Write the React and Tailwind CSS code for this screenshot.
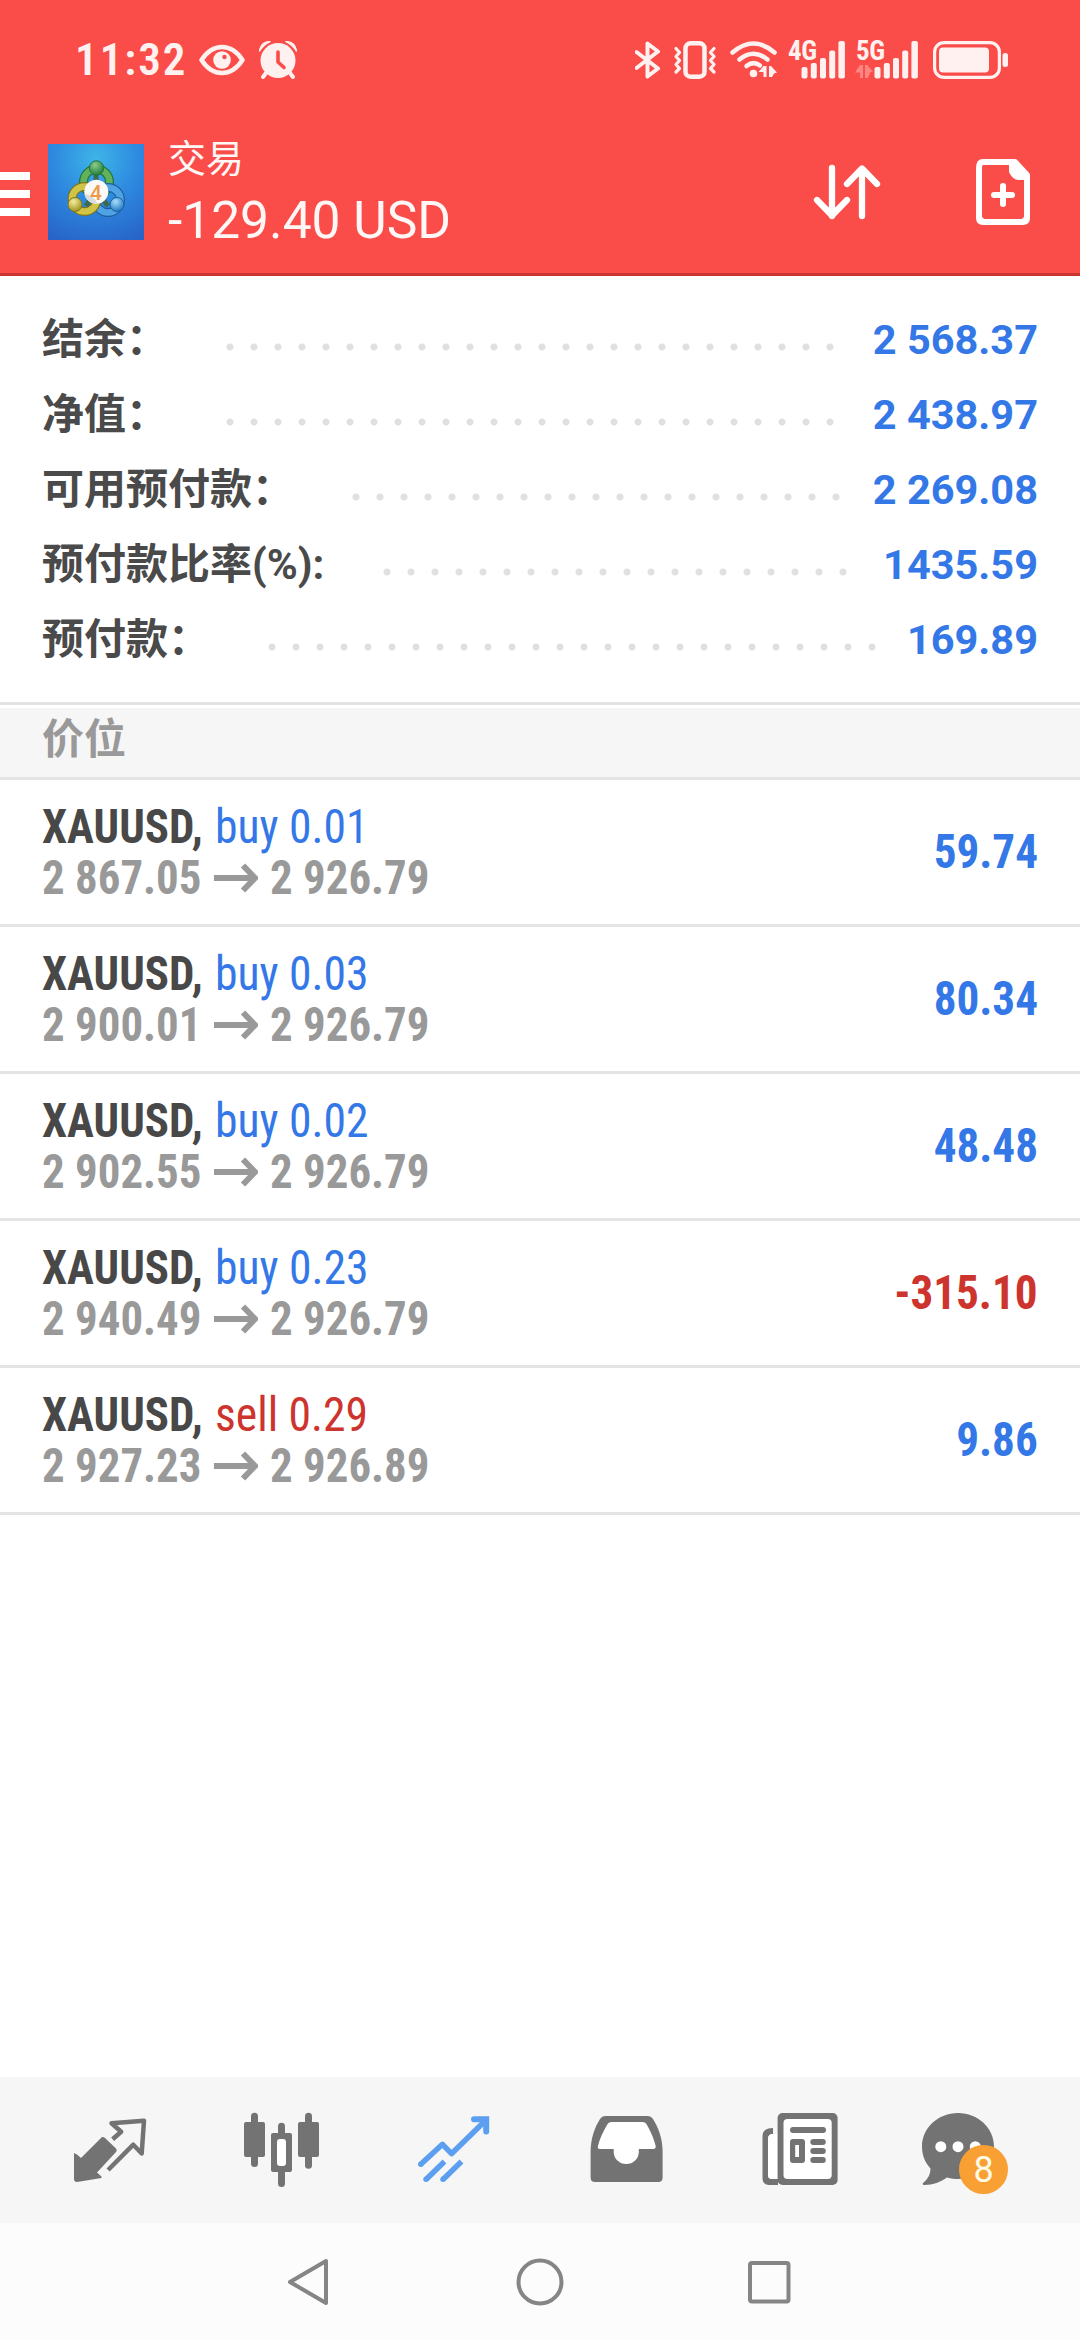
const SANS = "font-['Roboto','Noto_Sans_CJK_SC',sans-serif]";

const summary = [
  { label: "结余：", value: "2 568.37", labelWidth: "w-[176px]", dots: "w-[624px]" },
  { label: "净值：", value: "2 438.97", labelWidth: "w-[176px]", dots: "w-[624px]" },
  { label: "可用预付款：", value: "2 269.08", labelWidth: "w-[302px]", dots: "w-[504px]" },
  { label: "预付款比率(%):", value: "1435.59", labelWidth: "w-[333px]", dots: "w-[480px]" },
  { label: "预付款：", value: "169.89", labelWidth: "w-[218px]", dots: "w-[624px]" },
];

const positions = [
  { symbol: "XAUUSD", side: "buy", volume: "0.01", open: "2 867.05", current: "2 926.79", profit: "59.74" },
  { symbol: "XAUUSD", side: "buy", volume: "0.03", open: "2 900.01", current: "2 926.79", profit: "80.34" },
  { symbol: "XAUUSD", side: "buy", volume: "0.02", open: "2 902.55", current: "2 926.79", profit: "48.48" },
  { symbol: "XAUUSD", side: "buy", volume: "0.23", open: "2 940.49", current: "2 926.79", profit: "-315.10" },
  { symbol: "XAUUSD", side: "sell", volume: "0.29", open: "2 927.23", current: "2 926.89", profit: "9.86" },
];

function EyeIcon() {
  return (
    <svg width="46" height="38" viewBox="0 0 46 38" fill="none">
      <path d="M2.500 19C9 9 16 6 23 6s14 3 20.500 13C37 29 30 32 23 32S9 29 2.500 19Z" stroke="#fff1ef" strokeWidth="4.500" strokeLinejoin="round" />
      <circle cx="23" cy="19" r="8.800" fill="#fff1ef" />
      <circle cx="25.500" cy="16" r="2.200" fill="#fa4d49" />
    </svg>
  );
}

function AlarmIcon() {
  return (
    <svg width="38" height="38" viewBox="0 0 38 38" fill="none">
      <circle cx="19" cy="19.500" r="17.500" fill="#fff1ef" />
      <path d="M0.500 10Q2 1 11 0.500Q4 4 0.500 10ZM37.500 10Q36 1 27 0.500Q34 4 37.500 10Z" fill="#fff1ef" stroke="#fff1ef" strokeWidth="1.500" strokeLinejoin="round" />
      <path d="M7 32l-3 4M31 32l3 4" stroke="#fff1ef" strokeWidth="4" strokeLinecap="round" />
      <path d="M19 11v10l6 5.500" stroke="#fa4d49" strokeWidth="3.600" strokeLinecap="round" strokeLinejoin="round" />
    </svg>
  );
}

function BluetoothIcon() {
  return (
    <svg width="26" height="38" viewBox="0 0 26 38" fill="none" stroke="#fff1ef" strokeWidth="4" strokeLinejoin="round" strokeLinecap="round">
      <path d="M1.500 11L23 27.500 12.500 35.500V2.500L23 10.500 1.500 27" />
    </svg>
  );
}

function VibrateIcon() {
  return (
    <svg width="44" height="38" viewBox="0 0 44 38" fill="none" stroke="#fff1ef" strokeLinejoin="round" strokeLinecap="round">
      <rect x="12.500" y="2.300" width="19" height="33.400" rx="5" strokeWidth="4.500" />
      <path d="M3 7.500l3.500 4L3 15.500 6.500 19.500 3 23.500l3.500 4L3 31M41 7.500l-3.500 4 3.500 4-3.500 4 3.500 4-3.500 4 3.500 3.500" strokeWidth="3.200" />
    </svg>
  );
}

function WifiIcon() {
  return (
    <svg width="48" height="38" viewBox="0 0 48 38" fill="none" stroke="#fff1ef" strokeLinecap="round">
      <path d="M2.500 11.500Q23.500 -6.500 44.500 11.500" strokeWidth="4.500" />
      <path d="M9.500 18.500Q23.500 7 37.500 18.500" strokeWidth="4.500" />
      <path d="M16.500 25Q23.500 19.500 30 24.500" strokeWidth="4.500" />
      <circle cx="23.500" cy="32.500" r="3.800" fill="#fff1ef" stroke="none" />
      <path d="M33.500 25h3v11h-3v-5h-5zM39 36V25h2l6 6.500-3 1-2 3.500z" fill="#fff1ef" stroke="none" />
    </svg>
  );
}

function SignalIcon({ label, idle }) {
  return (
    <div className="relative h-[38px] w-[58px]">
      <svg width="58" height="38" viewBox="0 0 58 38" fill="#fff1ef" overflow="visible">
        <rect x="13.500" y="26" width="6" height="11.500" rx="2" />
        <rect x="22.800" y="22" width="6" height="15.500" rx="2" />
        <rect x="32" y="17" width="6" height="20.500" rx="2" />
        <rect x="41.200" y="9.500" width="6" height="28" rx="2" />
        <rect x="50.400" y="0" width="6.500" height="37.500" rx="2" />
        {idle && <path d="M-1 24h3v13h-3v-5.500H-6zM4 37V24h2l6 6.500-3 1-2 5.500z" fill="#ff8583" />}
      </svg>
      <span className={`${idle ? "left-[-5px]" : "left-0"} absolute top-[-4px] text-[27px] leading-[28px] font-bold tracking-[-0.5px] text-[#fff1ef] [font-stretch:75%]`}>{label}</span>
    </div>
  );
}

function BatteryIcon() {
  return (
    <svg width="76" height="38" viewBox="0 0 76 38" fill="none">
      <rect x="1.600" y="1.600" width="64.800" height="34.800" rx="9.500" stroke="#fff1ef" strokeWidth="3.200" />
      <rect x="6" y="6.500" width="50" height="25" rx="4" fill="#fff1ef" />
      <rect x="69.500" y="12" width="5.500" height="14" rx="2.500" fill="#fff1ef" />
    </svg>
  );
}

function AppLogo() {
  return (
    <svg width="96" height="96" viewBox="0 0 96 96" fill="none">
      <defs>
        <radialGradient id="sky" cx="50%" cy="15%" r="95%">
          <stop offset="0" stopColor="#3eb5e8" />
          <stop offset="0.450" stopColor="#2e8be0" />
          <stop offset="1" stopColor="#2763c8" />
        </radialGradient>
        <radialGradient id="green" cx="40%" cy="30%" r="70%">
          <stop offset="0" stopColor="#8ccb8c" />
          <stop offset="1" stopColor="#23803a" />
        </radialGradient>
        <radialGradient id="yellow" cx="40%" cy="30%" r="70%">
          <stop offset="0" stopColor="#f4ee9a" />
          <stop offset="1" stopColor="#a39520" />
        </radialGradient>
        <radialGradient id="blue" cx="40%" cy="30%" r="70%">
          <stop offset="0" stopColor="#a6defa" />
          <stop offset="1" stopColor="#2379c4" />
        </radialGradient>
      </defs>
      <rect width="96" height="96" fill="url(#sky)" />
      <circle cx="48.500" cy="38" r="13" stroke="#22733a" strokeWidth="9" />
      <circle cx="48.500" cy="38" r="13" stroke="#62b25c" strokeWidth="6.500" />
      <circle cx="60" cy="56" r="12.500" stroke="#1d5f9f" strokeWidth="9" />
      <circle cx="60" cy="56" r="12.500" stroke="#4fa3e2" strokeWidth="6.500" />
      <circle cx="36.500" cy="55" r="12.500" stroke="#7e7720" strokeWidth="9" />
      <circle cx="36.500" cy="55" r="12.500" stroke="#d0c345" strokeWidth="6.500" />
      <path d="M48 46L38 62M48 46l12 16M48 46V30" stroke="#3d6b50" strokeWidth="5" />
      <circle cx="48.500" cy="24" r="7.200" fill="url(#green)" stroke="#22733a" strokeWidth="1" />
      <circle cx="27" cy="60.500" r="7" fill="url(#yellow)" stroke="#7e7720" strokeWidth="1" />
      <circle cx="69" cy="60.500" r="7" fill="url(#blue)" stroke="#1d5f9f" strokeWidth="1" />
      <circle cx="48.300" cy="47.800" r="12" fill="#fbfaf8" />
      <path d="M36.500 50a12 12 0 0 0 13 9.700Q46 51 36.500 50Z" fill="#d9dcdd" />
      <text x="48" y="55.500" textAnchor="middle" fontSize="21" fontWeight="500" fill="#ee9a48" fontFamily="Roboto, sans-serif">4</text>
    </svg>
  );
}

function SortIcon() {
  return (
    <svg width="68" height="56" viewBox="0 0 68 56" fill="none" stroke="#fff" strokeWidth="6.300" strokeLinecap="round" strokeLinejoin="round">
      <path d="M19 4v48M4 36l15 15.500L34 36" />
      <path d="M49 52V5M34 20L49 4.500 64 20" />
    </svg>
  );
}

function NewOrderIcon() {
  return (
    <svg width="54" height="66" viewBox="0 0 54 66" fill="none">
      <path d="M3 9V59Q3 63 7 63H47Q51 63 51 59V16L39 3H7Q3 3 3 9Z" stroke="#fff" strokeWidth="6" strokeLinejoin="round" />
      <path d="M33 3V13Q36 20 42 21H53V16L40 2Z" fill="#fff" />
      <path d="M18 36H36M27 27V45" stroke="#fff" strokeWidth="6" strokeLinecap="round" />
      <path d="M4 54Q6 60 12 62L6 63 3 60ZM50 54Q48 60 42 62L48 63 51 60Z" fill="#fff" />
    </svg>
  );
}

function QuotesIcon() {
  return (
    <svg width="96" height="96" viewBox="0 0 96 96" fill="none">
      <path d="M12 51Q15 52 19 56L38.500 36.500Q40.500 34 43 36L54 46.500Q55.500 48.500 54 50L35 70.500 39.500 74.500V76L15 80Q12 80 12 77Z" fill="#737373" />
      <path d="M50.600 37.300L59.200 29.700 49.500 21.300 82 18.700 79.700 51.500 71.300 42.700 46.100 68" stroke="#737373" strokeWidth="4.500" strokeLinejoin="round" />
    </svg>
  );
}

function ChartIcon() {
  return (
    <svg width="96" height="96" viewBox="0 0 96 96" fill="#737373">
      <rect x="10" y="20" width="21" height="35" rx="2" />
      <rect x="17" y="10.700" width="7" height="54.300" rx="3.500" />
      <rect x="64" y="20" width="21" height="35" rx="2" />
      <rect x="71" y="10.700" width="7" height="56" rx="3.500" />
      <rect x="44" y="20.700" width="7" height="64.300" rx="3.500" />
      <rect x="37" y="31" width="21" height="39" rx="2" />
      <rect x="43" y="37" width="9" height="27" rx="3" fill="#fff" />
    </svg>
  );
}

function TradeIcon() {
  return (
    <svg width="96" height="96" viewBox="0 0 96 96" fill="none" stroke="#5c9ff0" strokeWidth="5.500">
      <path d="M14.500 62.500L36.500 42.300 45.500 51.700 80 18" strokeLinejoin="round" />
      <path d="M68 17.300H80.200V29.500" strokeWidth="6" strokeLinecap="round" />
      <path d="M20 77.500L38.500 59.500M37 77.500L55.500 59.500" />
      <g fill="#5c9ff0" stroke="none">
        <circle cx="14.800" cy="62.300" r="2.750" />
        <circle cx="20" cy="77.300" r="2.750" />
        <circle cx="37" cy="77.300" r="2.750" />
      </g>
    </svg>
  );
}

function HistoryIcon() {
  return (
    <svg width="96" height="96" viewBox="0 0 96 96">
      <path d="M12.600 50C12.600 36 17 25 22 17Q24 14 27 14H70Q73 14 75 17C80 25 84.600 36 84.600 50V75.500Q84.600 80 80 80H17Q12.600 80 12.600 75.500Z" fill="#737373" />
      <path d="M29 23Q30.500 20 33.500 20H64.500Q67.500 20 69 23C73 30 76 37 77.700 44Q78 47 75 47H60.800V50A12.500 12 0 0 1 35.700 50V47H22Q19 47 20 44C21.500 37 25 30 29 23Z" fill="#fff" />
    </svg>
  );
}

function NewsIcon() {
  return (
    <svg width="96" height="96" viewBox="0 0 96 96">
      <path d="M23 26V32Q18 32 18 37V73Q18 77 22 77H28V83H19Q12.500 83 12.500 76V34Q12.500 26 23 26Z" fill="#737373" />
      <path d="M18 37Q18 32 23 32H27.600V77H22Q18 77 18 73Z" fill="#fff" />
      <rect x="27.600" y="11" width="60" height="72" rx="5" fill="#737373" />
      <rect x="33.500" y="17" width="48.200" height="60" rx="4" fill="#fff" />
      <g fill="#737373">
        <rect x="40" y="25" width="36" height="6" rx="3" />
        <rect x="40" y="37" width="15" height="24" rx="3" />
        <rect x="60.300" y="37" width="15.500" height="6" rx="3" />
        <rect x="60.300" y="46" width="15.500" height="6" rx="3" />
        <rect x="60.300" y="55" width="15.500" height="6" rx="3" />
      </g>
      <rect x="45.200" y="43" width="3.800" height="12" fill="#fff" />
    </svg>
  );
}

function ChatIcon() {
  return (
    <svg width="96" height="96" viewBox="0 0 96 96">
      <path d="M36 11C16 11 0 26 0 44.500C0 54 3.500 61 8.500 66.500C8.500 73 5 78 1 81Q0 83 2.500 83C11 83 19 80 25 75.500C29 77 33 77 36 77C56 77 72 63 72 44.500C72 26 56 11 36 11Z" fill="#737373" />
      <g fill="#fff">
        <circle cx="18.800" cy="44.700" r="5.500" />
        <circle cx="36" cy="44.700" r="5.500" />
        <circle cx="53.300" cy="44.700" r="5.500" />
      </g>
    </svg>
  );
}

function StatusBar() {
  return (
    <div className="flex h-[120px] items-center pr-[71px] pl-[75px]">
      <span className="w-[124px] text-[45px] leading-[48px] font-semibold tracking-[2px] text-[#fff1ef] [font-stretch:84%]">11:32</span>
      <EyeIcon />
      <span className="ml-[14px]"><AlarmIcon /></span>
      <div className="ml-auto flex items-center">
        <BluetoothIcon />
        <span className="ml-[12px]"><VibrateIcon /></span>
        <span className="ml-[13px]"><WifiIcon /></span>
        <span className="ml-[10px]"><SignalIcon label="4G" /></span>
        <span className="ml-[15px]"><SignalIcon label="5G" idle /></span>
        <span className="ml-[14px]"><BatteryIcon /></span>
      </div>
    </div>
  );
}

function Header() {
  return (
    <header className="h-[276px] border-b-[3px] border-[#c9352f] bg-[#fa4d49]">
      <StatusBar />
      <div className="flex h-[144px] items-center">
        <div className="flex w-[30px] flex-col gap-[10px] pt-[4px]">
          <div className="h-[8px] bg-white" />
          <div className="h-[8px] bg-white" />
          <div className="h-[8px] bg-white" />
        </div>
        <div className="ml-[18px]"><AppLogo /></div>
        <div className="ml-[24px] flex flex-col pt-[3px] text-[#fff7f6]">
          <span className="text-[38px] leading-[54px]">交易</span>
          <span className="text-[51.500px] leading-[69px]">-129.40 USD</span>
        </div>
        <div className="ml-auto flex items-center gap-[95px] pr-[50px]">
          <SortIcon />
          <NewOrderIcon />
        </div>
      </div>
    </header>
  );
}

function SummaryRow({ label, value, labelWidth, dots }) {
  return (
    <div className="flex h-[75px] items-center text-[42px] leading-[60px] font-bold whitespace-nowrap">
      <span className={`${labelWidth} shrink-0 text-[#4a4a4a]`}>{label}</span>
      <div className={`${dots} mt-[15px] h-[24px] shrink-0 bg-[radial-gradient(circle,#e0e0e0_3px,transparent_4px)] bg-[length:24px_24px]`} />
      <span className="ml-auto text-[41.500px] text-[#3478e8]">{value}</span>
    </div>
  );
}

function PositionRow({ symbol, side, volume, open, current, profit }) {
  const sideColor = side === "buy" ? "text-[#3478e8]" : "text-[#cd342e]";
  const profitColor = profit.startsWith("-") ? "text-[#cd342e]" : "text-[#3478e8]";
  return (
    <div className="flex h-[147px] items-center justify-between border-b-[3px] border-[#e4e4e4] px-[42px] text-[48px] leading-[51px] whitespace-nowrap [font-stretch:75%]">
      <div>
        <div className="flex">
          <span className="w-[173px] origin-left scale-x-[0.935] font-bold text-[#484848]">{symbol},</span>
          <span className={`${sideColor} origin-left scale-x-[0.95]`}>{side} {volume}</span>
        </div>
        <div className="flex items-center font-bold text-[#999999]">
          <span className="w-[172px] origin-left scale-x-[0.935]">{open}</span>
          <svg width="44" height="30" viewBox="0 0 44 30" fill="none" stroke="#999999" strokeWidth="6">
            <path d="M0 15H40M29 2.500L41 15 29 27.500" />
          </svg>
          <span className="ml-[12px] origin-left scale-x-[0.935]">{current}</span>
        </div>
      </div>
      <span className={`${profitColor} mb-[2px] origin-right scale-x-[0.94] font-bold`}>{profit}</span>
    </div>
  );
}

export default function App() {
  return (
    <div className={`flex h-[2340px] w-[1080px] flex-col overflow-hidden bg-white ${SANS}`}>
      <Header />
      <section className="h-[429px] border-b-[3px] border-[#e2e2e2] px-[42px] pt-[26px]">
        {summary.map((row) => (
          <SummaryRow key={row.label} {...row} />
        ))}
      </section>
      <div className="flex h-[75px] items-center border-t-[3px] border-b-[3px] border-t-white border-b-[#e4e4e4] bg-[#f6f6f6] px-[42px] pb-[6px] text-[42px] leading-[60px] font-bold text-[#999999]">
        价位
      </div>
      {positions.map((p) => (
        <PositionRow key={p.open} {...p} />
      ))}
      <nav className="mt-auto flex h-[146px] items-center bg-[#f6f6f6] px-[24px]">
        {[QuotesIcon, ChartIcon, TradeIcon, HistoryIcon, NewsIcon].map((Icon, i) => (
          <div key={i} className="flex w-[172px] justify-center"><Icon /></div>
        ))}
        <div className="flex w-[172px] justify-center">
          <div className="relative">
            <ChatIcon />
            <span className="absolute top-[43px] left-[37px] flex size-[49px] items-center justify-center rounded-full bg-[#f9a035] text-[36px] text-[#fffbe6]">8</span>
          </div>
        </div>
      </nav>
      <footer className="flex h-[117px] items-center justify-center gap-[184px] bg-[#fcfcfc]">
        <svg width="48" height="48" viewBox="0 0 48 48" fill="none" stroke="#858585" strokeWidth="4" strokeLinejoin="round">
          <path d="M6 24L42 3V45Z" />
        </svg>
        <svg width="48" height="48" viewBox="0 0 48 48" fill="none" stroke="#858585" strokeWidth="4">
          <circle cx="24" cy="24" r="21.500" />
        </svg>
        <svg width="48" height="48" viewBox="0 0 48 48" fill="none" stroke="#858585" strokeWidth="4">
          <rect x="2" y="5" width="38.500" height="38.500" rx="2" />
        </svg>
      </footer>
    </div>
  );
}
